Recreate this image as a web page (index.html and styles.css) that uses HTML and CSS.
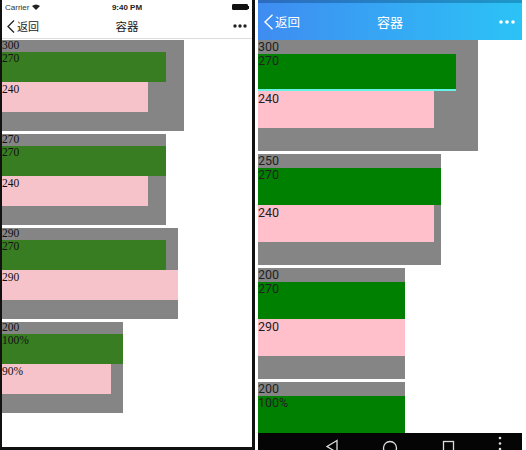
FILE: index.html
```html
<!DOCTYPE html>
<html lang="zh">
<head>
    <meta charset="UTF-8">
    <meta name="viewport" content="width=device-width, initial-scale=1.0">
    <title>容器</title>
    <link rel="stylesheet" href="styles.css">
</head>
<body>
<div class="screens">
    <!-- iOS -->
    <div class="phone ios">
        <div class="status">
            <div class="carrier">Carrier
                <svg width="8" height="6" viewBox="0 0 8 6"><path d="M0 2 Q4 -1 8 2 L4 6 Z" fill="#222"/></svg>
            </div>
            <div class="time">9:40 PM</div>
            <div class="battery"><span class="cell"></span><span class="nub"></span></div>
        </div>
        <div class="navbar">
            <div class="back">
                <svg width="8" height="13" viewBox="0 0 8 13"><path d="M7 0.5 L1 6.5 L7 12.5" fill="none" stroke="#222" stroke-width="1.3"/></svg>
                <span>返回</span>
            </div>
            <div class="title">容器</div>
            <div class="more">
                <svg width="14" height="4" viewBox="0 0 14 4"><circle cx="2" cy="2" r="1.7" fill="#222"/><circle cx="7" cy="2" r="1.7" fill="#222"/><circle cx="12" cy="2" r="1.7" fill="#222"/></svg>
            </div>
        </div>
        <div class="content">
            <div class="box w300"><div class="label">300</div><div class="green w270">270</div><div class="pink w240">240</div></div>
            <div class="box w270"><div class="label">270</div><div class="green w270">270</div><div class="pink w240">240</div></div>
            <div class="box w290"><div class="label">290</div><div class="green w270">270</div><div class="pink w290">290</div></div>
            <div class="box w200"><div class="label">200</div><div class="green p100">100%</div><div class="pink p90">90%</div></div>
        </div>
    </div>

    <!-- Android -->
    <div class="phone android">
        <div class="topstrip"></div>
        <div class="header">
            <div class="back">
                <svg width="11" height="16" viewBox="0 0 11 16"><path d="M9.5 0.8 L2 8 L9.5 15.2" fill="none" stroke="#fff" stroke-width="1.4"/></svg>
                <span>返回</span>
            </div>
            <div class="title">容器</div>
            <div class="more">
                <svg width="16" height="4" viewBox="0 0 16 4"><circle cx="2" cy="2" r="1.8" fill="#fff"/><circle cx="8" cy="2" r="1.8" fill="#fff"/><circle cx="14" cy="2" r="1.8" fill="#fff"/></svg>
            </div>
        </div>
        <div class="content">
            <div class="box w300"><div class="label">300</div><div class="green w270 edge">270</div><div class="pink w240">240</div></div>
            <div class="box w250"><div class="label">250</div><div class="green w270">270</div><div class="pink w240">240</div></div>
            <div class="box w200"><div class="label">200</div><div class="green w270">270</div><div class="pink w290">290</div></div>
            <div class="box w200"><div class="label">200</div><div class="green p100">100%</div><div class="pink p90">90%</div></div>
        </div>
        <div class="sysnav">
            <svg width="264" height="17" viewBox="0 0 264 17">
                <path d="M79 7.5 L69 13.5 L79 19.5 Z" fill="none" stroke="#ddd" stroke-width="1.3"/>
                <circle cx="132" cy="15" r="6.5" fill="none" stroke="#ddd" stroke-width="1.3"/>
                <rect x="185.5" y="8.5" width="10" height="12" fill="none" stroke="#ddd" stroke-width="1.3"/>
                <circle cx="242" cy="5" r="1.3" fill="#ddd"/>
                <circle cx="242" cy="10.5" r="1.3" fill="#ddd"/>
                <circle cx="242" cy="16" r="1.3" fill="#ddd"/>
            </svg>
        </div>
    </div>
</div>
</body>
</html>
```

FILE: styles.css
```css
body { margin: 0; background: #fff; font-family: "Liberation Sans", Arial, "Noto Sans CJK SC", sans-serif; }
.screens { display: flex; width: 526px; height: 450px; overflow: hidden; }
.phone { flex: none; overflow: hidden; }

/* iOS */
.ios { width: 250px; height: 447px; border: solid #111; border-width: 0 3px 3px 2px; background: #fff; }
.ios .status { display: grid; grid-template-columns: 1fr auto 1fr; align-items: center; height: 14px; padding: 0 3px 0 3px; font-size: 8px; color: #333; }
.ios .carrier { display: flex; align-items: center; gap: 3px; }
.ios .time { font-weight: bold; color: #222; }
.ios .battery { justify-self: end; display: flex; align-items: center; }
.ios .cell { width: 14px; height: 4px; background: #111; border: 1px solid #111; border-radius: 1px; }
.ios .nub { width: 1px; height: 3px; background: #111; }
.ios .navbar { display: grid; grid-template-columns: 1fr auto 1fr; align-items: center; height: 24px; border-bottom: 1px solid #ddd; font-size: 11px; color: #222; }
.ios .back { display: flex; align-items: center; gap: 2px; padding-left: 5px; }
.ios .title { font-size: 11.5px; }
.ios .more { justify-self: end; padding-right: 5px; display: flex; }
.ios .content { padding-top: 1px; font-family: "Liberation Serif", "Times New Roman", serif; font-size: 11.5px; color: #111; }
.ios .box { height: 91px; margin-bottom: 3px; background: #858585; }
.ios .label { height: 12px; line-height: 11px; }
.ios .green { height: 30px; line-height: 12px; background: #387d22; }
.ios .pink { height: 30px; line-height: 14px; background: #f6c3cb; }
.ios .w300 { width: 182px; }
.ios .w290 { width: 176px; }
.ios .w270 { width: 164px; }
.ios .w240 { width: 146px; }
.ios .w200 { width: 121px; }

/* Android */
.android { display: flex; flex-direction: column; width: 264px; height: 450px; margin-left: 3px; background: #fff; }
.android .topstrip { height: 3px; background: linear-gradient(90deg, #2c6bbf, #1d98c9); }
.android .header { display: grid; grid-template-columns: 1fr auto 1fr; align-items: center; height: 37px; background: linear-gradient(90deg, #3f8cf1, #2cc3f6); color: #fff; font-family: "Noto Sans CJK SC", sans-serif; }
.android .back { display: flex; align-items: center; gap: 1px; padding-left: 5px; font-size: 12.5px; }
.android .title { font-size: 13px; }
.android .more { justify-self: end; padding-right: 7px; display: flex; }
.android .content { flex: 1; overflow: hidden; font-family: Roboto, "Noto Sans", sans-serif; font-size: 12.5px; color: #222; }
.android .box { height: 111px; margin-bottom: 3px; background: #858585; overflow: hidden; }
.android .label { height: 14px; line-height: 14px; }
.android .green { height: 37px; line-height: 13px; background: #008000; box-sizing: border-box; }
.android .green.edge { border-bottom: 2px solid #66f2e4; }
.android .pink { height: 37px; line-height: 16px; background: #ffc0cb; }
.android .w300 { width: 220px; }
.android .w290 { width: 213px; }
.android .w270 { width: 198px; }
.android .w250 { width: 183px; }
.android .w240 { width: 176px; }
.android .w200 { width: 147px; }
.android .sysnav { height: 17px; flex: none; background: #050505; overflow: hidden; }
.android .sysnav svg { display: block; }

.p100 { width: 100%; }
.p90 { width: 90%; }
```
